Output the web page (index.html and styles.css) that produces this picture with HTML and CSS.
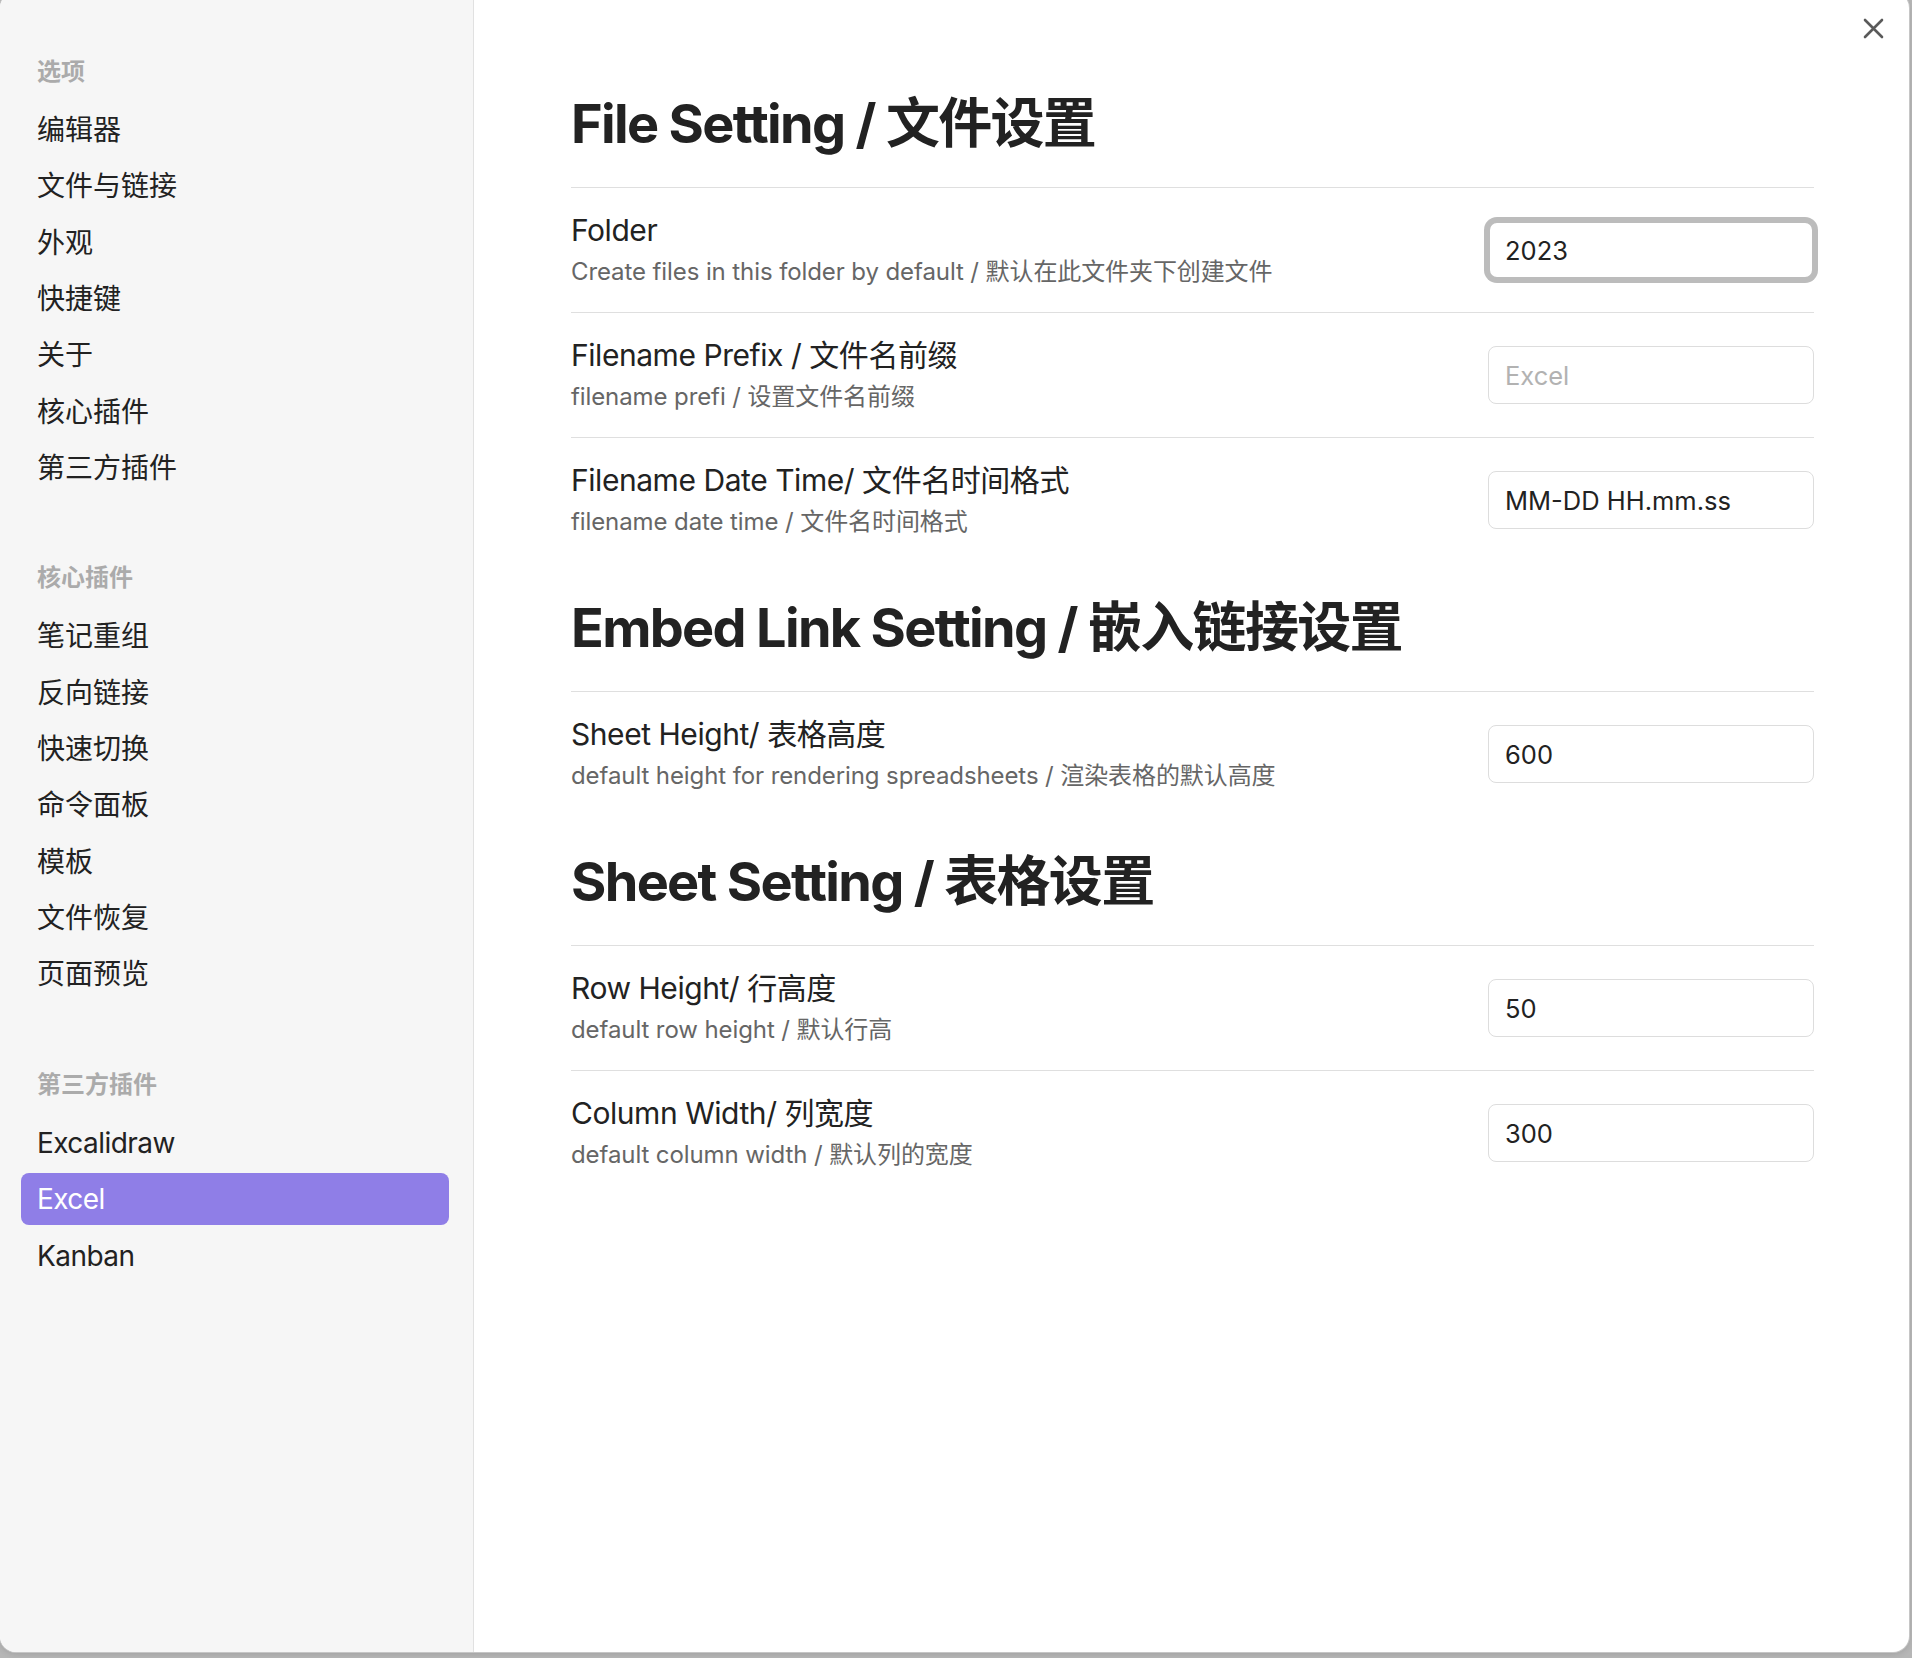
FILE: index.html
```html
<!DOCTYPE html>
<html lang="zh-CN">
<head>
<meta charset="utf-8">
<title>Settings</title>
<link rel="stylesheet" href="styles.css">
</head>
<body>
<div class="modal">
  <aside class="sidebar">
    <nav class="nav-group">
      <div class="nav-title">选项</div>
      <div class="nav-item">编辑器</div>
      <div class="nav-item">文件与链接</div>
      <div class="nav-item">外观</div>
      <div class="nav-item">快捷键</div>
      <div class="nav-item">关于</div>
      <div class="nav-item">核心插件</div>
      <div class="nav-item">第三方插件</div>
    </nav>
    <nav class="nav-group">
      <div class="nav-title">核心插件</div>
      <div class="nav-item">笔记重组</div>
      <div class="nav-item">反向链接</div>
      <div class="nav-item">快速切换</div>
      <div class="nav-item">命令面板</div>
      <div class="nav-item">模板</div>
      <div class="nav-item">文件恢复</div>
      <div class="nav-item">页面预览</div>
    </nav>
    <nav class="nav-group">
      <div class="nav-title">第三方插件</div>
      <div class="nav-item latin">Excalidraw</div>
      <div class="nav-item latin active">Excel</div>
      <div class="nav-item latin">Kanban</div>
    </nav>
  </aside>
  <main class="content">
    <h2 class="heading">File Setting / 文件设置</h2>
    <div class="setting">
      <div class="info">
        <div class="name">Folder</div>
        <div class="desc">Create files in this folder by default / 默认在此文件夹下创建文件</div>
      </div>
      <input class="field focused" type="text" value="2023">
    </div>
    <div class="setting">
      <div class="info">
        <div class="name">Filename Prefix / 文件名前缀</div>
        <div class="desc">filename prefi / 设置文件名前缀</div>
      </div>
      <input class="field" type="text" placeholder="Excel">
    </div>
    <div class="setting">
      <div class="info">
        <div class="name">Filename Date Time/ 文件名时间格式</div>
        <div class="desc">filename date time / 文件名时间格式</div>
      </div>
      <input class="field" type="text" value="MM-DD HH.mm.ss">
    </div>

    <h2 class="heading">Embed Link Setting / 嵌入链接设置</h2>
    <div class="setting">
      <div class="info">
        <div class="name">Sheet Height/ 表格高度</div>
        <div class="desc">default height for rendering spreadsheets / 渲染表格的默认高度</div>
      </div>
      <input class="field" type="text" value="600">
    </div>

    <h2 class="heading">Sheet Setting / 表格设置</h2>
    <div class="setting">
      <div class="info">
        <div class="name">Row Height/ 行高度</div>
        <div class="desc">default row height / 默认行高</div>
      </div>
      <input class="field" type="text" value="50">
    </div>
    <div class="setting">
      <div class="info">
        <div class="name">Column Width/ 列宽度</div>
        <div class="desc">default column width / 默认列的宽度</div>
      </div>
      <input class="field" type="text" value="300">
    </div>
  </main>
  <button class="close" type="button" aria-label="关闭">
    <svg viewBox="0 0 21 21" width="21" height="21"><path d="M2 2 L19 19 M19 2 L2 19" stroke="#5a5a5a" stroke-width="2.6" stroke-linecap="round" fill="none"/></svg>
  </button>
</div>
</body>
</html>
```

FILE: styles.css
```css
html, body {
  margin: 0;
  padding: 0;
}

body {
  width: 1912px;
  height: 1658px;
  overflow: hidden;
  background: #b6b6b6;
  font-family: Inter, "Noto Sans CJK SC", sans-serif;
  color: #222222;
}

.modal {
  position: relative;
  display: flex;
  width: 1909px;
  height: 1660px;
  margin-top: -8px;
  background: #ffffff;
  border-radius: 16px;
  overflow: hidden;
  box-shadow: 0 0 0 1px #c6c6c6, 0 2px 6px rgba(0, 0, 0, 0.12);
}

/* ---------- sidebar ---------- */
.sidebar {
  flex: none;
  width: 474px;
  box-sizing: border-box;
  background: #f6f6f6;
  border-right: 1px solid #e1e1e1;
  padding: 62px 24px 0 21px;
}

.nav-group {
  display: flex;
  flex-direction: column;
  gap: 4.33px;
}

.nav-group + .nav-group {
  margin-top: 66.5px;
}

.nav-title {
  font-size: 24px;
  font-weight: 700;
  line-height: 36px;
  color: #ababab;
  padding-left: 16px;
  margin-bottom: 9.67px;
}

.nav-item {
  height: 52px;
  line-height: 52px;
  padding: 0 16px;
  font-size: 28px;
  color: #222222;
  border-radius: 8px;
}

.nav-item.latin {
  letter-spacing: -0.02em;
}

.nav-item.active {
  background: #8f7ee7;
  color: #ffffff;
}

/* ---------- content ---------- */
.content {
  flex: 1;
  padding: 66px 95px 0 97px;
}

.heading {
  margin: 0;
  padding: 40px 0 37px;
  font-size: 54px;
  line-height: 52px;
  font-weight: 700;
  letter-spacing: -0.031em;
  color: #222222;
}

.setting {
  display: flex;
  align-items: center;
  justify-content: space-between;
  border-top: 1px solid #dfdfdf;
  padding: 22px 0;
}

.info {
  display: flex;
  flex-direction: column;
  gap: 4px;
  min-height: 80px;
}

.name {
  font-size: 30px;
  line-height: 40px;
  letter-spacing: -0.015em;
  color: #222222;
}

.desc {
  font-size: 24px;
  line-height: 36px;
  letter-spacing: -0.004em;
  color: #666666;
}

.field {
  flex: none;
  width: 326px;
  height: 58px;
  box-sizing: border-box;
  margin: 0;
  padding: 0 16px;
  border: 1px solid #dddddd;
  border-radius: 8px;
  background: #ffffff;
  font-family: Inter, "Noto Sans CJK SC", sans-serif;
  font-size: 25.5px;
  color: #222222;
  outline: none;
}

.field::placeholder {
  color: #b2b2b2;
}

.field.focused {
  border: 2px solid #bcbcbc;
  padding: 0 15px;
  border-radius: 9px;
  box-shadow: 0 0 0 4px #bcbcbc;
}

.close {
  position: absolute;
  top: 26px;
  right: 25px;
  width: 21px;
  height: 21px;
  padding: 0;
  border: 0;
  background: none;
  cursor: pointer;
}

.close svg {
  display: block;
}
```
